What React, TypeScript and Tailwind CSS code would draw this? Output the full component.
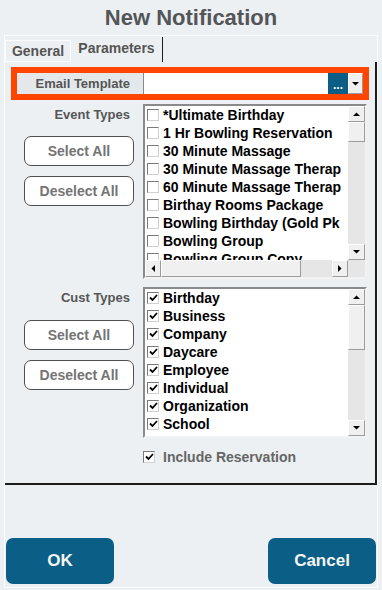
import React from 'react';

const eventTypes = [
  '*Ultimate Birthday',
  '1 Hr Bowling Reservation',
  '30 Minute Massage',
  '30 Minute Massage Therap',
  '60 Minute Massage Therap',
  'Birthay Rooms Package',
  'Bowling Birthday (Gold Pk',
  'Bowling Group',
  'Bowling Group Copy',
  'Bowling Party',
];

const custTypes = [
  'Birthday',
  'Business',
  'Company',
  'Daycare',
  'Employee',
  'Individual',
  'Organization',
  'School',
  'Unknown',
];

type Dir = 'up' | 'down' | 'left' | 'right';

function Arrow({ dir }: { dir: Dir }) {
  const vert = dir === 'up' || dir === 'down';
  const pts = {
    up: '0,4 7,4 3.5,0.5',
    down: '0,0 7,0 3.5,3.5',
    left: '4,0 4,7 0.5,3.5',
    right: '0,0 0,7 3.5,3.5',
  }[dir];
  return (
    <svg width={vert ? 7 : 4} height={vert ? 4 : 7} viewBox={vert ? '0 0 7 4' : '0 0 4 7'}>
      <polygon points={pts} fill="#000" />
    </svg>
  );
}

function ScrollBtn({ dir }: { dir: Dir }) {
  return (
    <div className="flex h-[16px] w-[16px] shrink-0 items-center justify-center border border-t-white border-l-white border-r-[#9c9c9c] border-b-[#9c9c9c] bg-[#f0f0f0]">
      <Arrow dir={dir} />
    </div>
  );
}

function CheckBox({ checked }: { checked?: boolean }) {
  return (
    <span className="flex h-[12px] w-[12px] shrink-0 items-center justify-center border border-t-[#7a7a7a] border-l-[#7a7a7a] border-r-[#d0d0d0] border-b-[#d0d0d0] bg-white">
      {checked && (
        <svg width="9" height="8" viewBox="0 0 9 8">
          <path d="M1 3.5 L3.5 6 L8 1" stroke="#000" strokeWidth="1.8" fill="none" />
        </svg>
      )}
    </span>
  );
}

function ListBox({
  items,
  checked,
  boxClass,
  thumbClass,
  hscroll,
}: {
  items: string[];
  checked?: boolean;
  boxClass: string;
  thumbClass: string;
  hscroll?: boolean;
}) {
  return (
    <div
      className={`flex w-[224px] flex-col border-2 border-t-[#8a8a8a] border-l-[#8a8a8a] border-r-[#f2f2f2] border-b-[#f2f2f2] bg-white ${boxClass}`}
    >
      <div className="flex min-h-0 flex-1">
        <div className="min-w-0 flex-1 overflow-hidden">
          {items.map((it) => (
            <div
              key={it}
              className="flex h-[18px] items-center gap-[4px] whitespace-nowrap pl-[2px] text-[14px] text-black"
            >
              <CheckBox checked={checked} />
              <span>{it}</span>
            </div>
          ))}
        </div>
        <div className="flex w-[17px] shrink-0 flex-col bg-[#e6e6e6]">
          <div className="w-full [&>div]:w-full">
            <ScrollBtn dir="up" />
          </div>
          <div className="flex-1">
            <div className={`w-full border border-t-white border-l-white border-r-[#9c9c9c] border-b-[#9c9c9c] bg-[#f0f0f0] ${thumbClass}`} />
          </div>
          <div className="w-full [&>div]:w-full">
            <ScrollBtn dir="down" />
          </div>
        </div>
      </div>
      {hscroll && (
        <div className="flex h-[17px] shrink-0">
          <div className="flex flex-1 bg-[#e6e6e6] [&>div]:h-full">
            <ScrollBtn dir="left" />
            <div className="w-[140px] border border-t-white border-l-white border-r-[#9c9c9c] border-b-[#9c9c9c] bg-[#f0f0f0]" />
            <div className="flex-1" />
            <ScrollBtn dir="right" />
          </div>
          <div className="w-[17px] bg-[#e6e6e6]" />
        </div>
      )}
    </div>
  );
}

function GrayButton({ label }: { label: string }) {
  return (
    <button className="flex h-[30px] w-[110px] items-center justify-center rounded-[7px] border border-[#505050] bg-white text-[14px] font-bold text-[#747474]">
      {label}
    </button>
  );
}

function Field({
  label,
  items,
  checked,
  boxClass,
  thumbClass,
  hscroll,
  first,
}: {
  label: string;
  items: string[];
  checked?: boolean;
  boxClass: string;
  thumbClass: string;
  hscroll?: boolean;
  first?: boolean;
}) {
  return (
    <div className={`flex ${first ? 'mt-[4px]' : 'mt-[8px]'}`}>
      <div className="flex w-[138px] shrink-0 flex-col pl-[19px]">
        <div className="mt-[2px] h-[18px] w-[106px] text-right text-[13px] leading-[18px] text-[#565656]">
          {label}
        </div>
        <div className={first ? 'mt-[12px]' : 'mt-[13px]'}>
          <GrayButton label="Select All" />
        </div>
        <div className="mt-[10px]">
          <GrayButton label="Deselect All" />
        </div>
      </div>
      <ListBox items={items} checked={checked} boxClass={boxClass} thumbClass={thumbClass} hscroll={hscroll} />
    </div>
  );
}

export default function App() {
  return (
    <div className="h-[590px] w-[382px] overflow-hidden bg-[#ecf0f3] font-['Liberation_Sans',Arial,sans-serif] font-bold">
      <div className="flex h-[35px] items-center justify-center text-[22px] text-[#535557]">New Notification</div>

      <div className="ml-[4px] flex h-[553px] w-[374px] flex-col border border-[#fbfcfd]">
        {/* tabs */}
        <div className="flex h-[26px] items-end">
          <div className="flex h-[22px] w-[66px] items-center justify-center border border-[#fbfcfd] text-[14px] text-[#555]">
            General
          </div>
          <div className="flex h-[25px] w-[92px] items-center justify-center border-r border-r-[#1c1c1c] pb-[3px] text-[14px] text-[#555]">
            Parameters
          </div>
        </div>

        {/* tab page */}
        <div className="flex h-[423px] flex-col border-r-2 border-b-2 border-r-[#1c1c1c] border-b-[#1c1c1c]">
          <div className="ml-[6px] mt-[5px] flex h-[33px] w-[358px] border-[6px] border-[#ff4500]">
            <div className="flex w-[127px] items-center justify-end border-r border-r-[#8a8a8a] bg-[#e4e8eb] pr-[13px] text-[13px] text-[#555]">
              Email Template
            </div>
            <div className="flex-1 bg-white" />
            <div className="flex w-[20px] items-end justify-center bg-[#0b5f86] pb-[3px] text-[12px] leading-none text-white">
              ...
            </div>
            <div className="flex w-[15px] items-center justify-center border border-t-white border-l-white border-r-[#9c9c9c] border-b-[#9c9c9c] bg-[#f0f0f0]">
              <Arrow dir="down" />
            </div>
          </div>

          <Field
            first
            label="Event Types"
            items={eventTypes}
            boxClass="h-[175px]"
            thumbClass="h-[20px]"
            hscroll
          />
          <Field label="Cust Types" items={custTypes} checked boxClass="h-[151px]" thumbClass="h-[45px]" />

          <div className="ml-[138px] mt-[10px] flex h-[18px] items-center gap-[8px] text-[14px] text-[#666]">
            <CheckBox checked />
            <span>Include Reservation</span>
          </div>
        </div>

        {/* footer buttons */}
        <div className="mt-[53px] flex justify-between px-[1px]">
          <button className="flex h-[46px] w-[108px] items-center justify-center rounded-[7px] bg-[#0b5f86] text-[17px] font-bold text-[#f4f4f4]">
            OK
          </button>
          <button className="flex h-[46px] w-[108px] items-center justify-center rounded-[7px] bg-[#0b5f86] text-[17px] font-bold text-[#f4f4f4]">
            Cancel
          </button>
        </div>
      </div>
    </div>
  );
}
